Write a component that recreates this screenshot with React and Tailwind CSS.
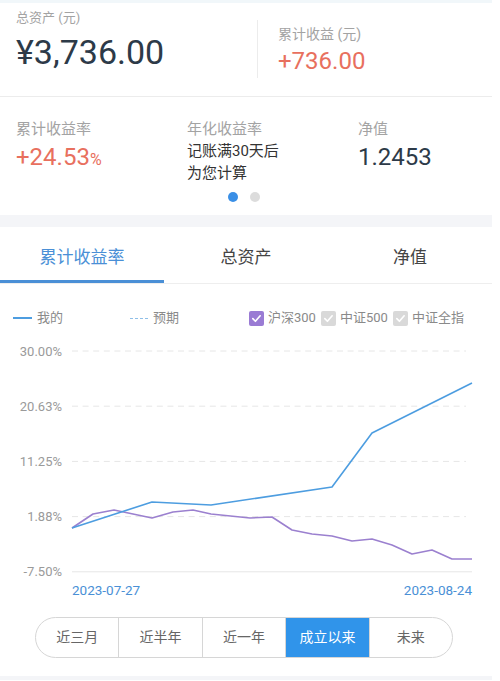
import React from "react";

const BLUE_LINE = [
  [72, 199], [152, 173], [211, 176], [332, 158], [372, 104], [472, 54],
];
const PURPLE_LINE = [
  [72, 199], [93, 185], [114, 181], [152, 189], [173, 183], [193, 181],
  [211, 185], [250, 189], [272, 188], [292, 201], [312, 205], [332, 207],
  [352, 212], [372, 210], [392, 216], [412, 225], [432, 221], [452, 230],
  [472, 230],
];
const Y_TICKS = ["30.00%", "20.63%", "11.25%", "1.88%", "-7.50%"];
const RANGES = ["近三月", "近半年", "近一年", "成立以来", "未来"];

const toPoints = (list) => list.map(([x, y]) => `${x},${y}`).join(" ");

const CheckBox = ({ color }) => (
  <span className={`w-[15px] h-[15px] rounded-[2px] flex items-center justify-center ${color}`}>
    <svg width="11" height="11" viewBox="0 0 12 12" fill="none">
      <path d="M2 6.2 L4.8 9 L10 3" stroke="#fff" strokeWidth="1.8" strokeLinecap="round" strokeLinejoin="round" />
    </svg>
  </span>
);

const Chart = () => (
  <svg width="492" height="272" className="block">
    {Y_TICKS.map((label, i) => {
      const y = 22 + i * 55.2;
      return (
        <g key={label}>
          <text x="62" y={y} textAnchor="end" dominantBaseline="central" fontSize="13" fill="#9a9a9a">
            {label}
          </text>
          {i < 4 ? (
            <line x1="72" x2="466" y1={y} y2={y} stroke="#e6e6e6" strokeWidth="1" strokeDasharray="6 4.6" />
          ) : (
            <line x1="72" x2="472" y1={y} y2={y} stroke="#e6e6e6" strokeWidth="1" />
          )}
        </g>
      );
    })}
    <polyline points={toPoints(PURPLE_LINE)} fill="none" stroke="#9b80cf" strokeWidth="1.6" strokeLinejoin="round" />
    <polyline points={toPoints(BLUE_LINE)} fill="none" stroke="#4d9de0" strokeWidth="1.6" strokeLinejoin="round" />
    <text x="72" y="261" dominantBaseline="central" fontSize="13.5" fill="#4a90d6">2023-07-27</text>
    <text x="472" y="261" textAnchor="end" dominantBaseline="central" fontSize="13.5" fill="#4a90d6">2023-08-24</text>
  </svg>
);

export default function App() {
  return (
    <div
      className="w-[492px] bg-white text-[#2d3a48]"
      style={{ fontFamily: '"Roboto", "Noto Sans CJK SC", sans-serif' }}
    >
      <div className="h-[3px] bg-[#f1f7fa]" />

      {/* 总资产 / 累计收益 */}
      <div className="h-[94px] flex border-b border-[#ececec]">
        <div className="w-[257px] pl-4 pt-[6px]">
          <div className="text-[13px] leading-[18px] text-[#a3a3a3]">总资产 (元)</div>
          <div className="mt-[5px] text-[34px] leading-[40px] text-[#2d3a48]">¥3,736.00</div>
        </div>
        <div className="self-start mt-[17px] h-[58px] border-l border-[#ececec] pl-[20px] pt-[4px]">
          <div className="text-[14px] leading-[20px] text-[#a3a3a3]">累计收益 (元)</div>
          <div className="mt-[2px] text-[24px] leading-[30px] text-[#e8705e]">+736.00</div>
        </div>
      </div>

      {/* 指标 */}
      <div className="h-[118px] pt-[22px]">
        <div className="flex pl-4">
          <div className="w-[171px]">
            <div className="text-[15px] leading-[20px] text-[#a3a3a3]">累计收益率</div>
            <div className="mt-[3px] text-[24px] leading-[30px] text-[#e8705e]">
              +24.53<span className="text-[16px]">%</span>
            </div>
          </div>
          <div className="w-[171px]">
            <div className="text-[15px] leading-[20px] text-[#a3a3a3]">年化收益率</div>
            <div className="mt-[1px] text-[15px] leading-[22px] text-[#333]">记账满30天后</div>
            <div className="text-[15px] leading-[22px] text-[#333]">为您计算</div>
          </div>
          <div className="flex-1">
            <div className="text-[15px] leading-[20px] text-[#a3a3a3]">净值</div>
            <div className="mt-[3px] text-[24px] leading-[30px] text-[#2d3a48]">1.2453</div>
          </div>
        </div>
        <div className="mt-[8px] flex justify-center gap-3 pr-[4px]">
          <span className="w-[10px] h-[10px] rounded-full bg-[#3a8fe6]" />
          <span className="w-[10px] h-[10px] rounded-full bg-[#dcdcdc]" />
        </div>
      </div>

      <div className="h-[12px] bg-[#f4f5f8]" />

      {/* Tabs */}
      <div className="flex h-[57px] border-b border-[#eeeeee]">
        <div className="w-[164px] h-[56px] pt-[18px] text-center text-[17px] leading-[24px] text-[#4a8fd6] border-b-[3px] border-[#4a8fd6]">
          累计收益率
        </div>
        <div className="w-[164px] pt-[18px] text-center text-[17px] leading-[24px] text-[#444]">总资产</div>
        <div className="w-[164px] pt-[18px] text-center text-[17px] leading-[24px] text-[#444]">净值</div>
      </div>

      {/* Chart */}
      <div className="pt-[25px]">
        <div className="flex items-center h-[18px] text-[13px] text-[#8a8a8a]">
          <div className="w-[130px] pl-[13px] flex items-center gap-[5px]">
            <span className="w-[19px] h-[2px] bg-[#4d9de0]" />
            <span>我的</span>
          </div>
          <div className="w-[119px] flex items-center gap-[5px]">
            <span className="w-[18px] border-t border-dashed border-[#8fbfe8]" />
            <span>预期</span>
          </div>
          <div className="w-[72px] flex items-center gap-[4px]">
            <CheckBox color="bg-[#9a7bd4]" />
            <span>沪深300</span>
          </div>
          <div className="w-[72px] flex items-center gap-[4px]">
            <CheckBox color="bg-[#d9d9d9]" />
            <span>中证500</span>
          </div>
          <div className="flex items-center gap-[4px]">
            <CheckBox color="bg-[#d9d9d9]" />
            <span>中证全指</span>
          </div>
        </div>
        <div className="mt-[2px]">
          <Chart />
        </div>
      </div>

      {/* Range selector */}
      <div className="pt-[16px] pb-[18px] pl-[35px]">
        <div className="w-[418px] h-[41px] flex rounded-full border border-[#d6d6d6] overflow-hidden">
          {RANGES.map((r, i) => (
            <div
              key={r}
              className={`flex-1 flex items-center justify-center text-[14px] ${
                i > 0 ? "border-l border-[#d6d6d6]" : ""
              } ${r === "成立以来" ? "bg-[#3094ea] text-white" : "text-[#666]"}`}
            >
              {r}
            </div>
          ))}
        </div>
      </div>

      <div className="h-[4px] bg-[#f4f5f8]" />
    </div>
  );
}
